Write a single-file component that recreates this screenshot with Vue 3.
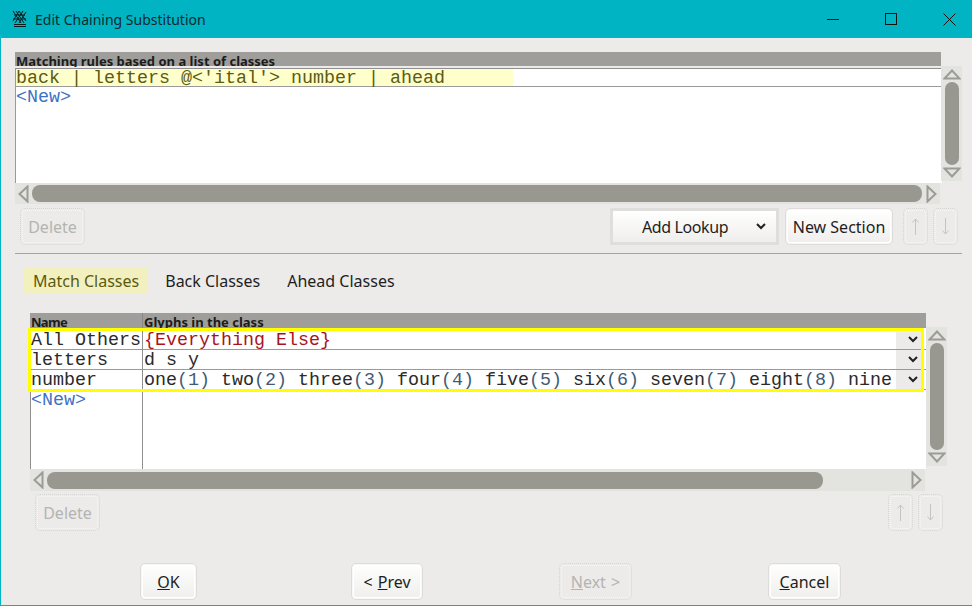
<template>
  <div class="window">
    <header class="titlebar">
      <svg class="app-icon" width="17" height="18" viewBox="0 0 17 18" fill="none" stroke="#0c1c1e" stroke-width="1">
        <path d="M3 14.5h12M3 16.5h12M2 1l8 12M5 1l8 12M8 1l7 10M12 1L4 13M15 2L8 13M8 1L2 11M3 5h11M2 9h13" />
      </svg>
      <span class="title">Edit Chaining Substitution</span>
      <div class="win-controls">
        <svg width="13" height="13" viewBox="0 0 13 13" stroke="#111" fill="none"><path d="M0 6.5h12" /></svg>
        <svg width="13" height="13" viewBox="0 0 13 13" stroke="#111" fill="none"><rect x="0.5" y="0.5" width="11" height="11" /></svg>
        <svg width="13" height="13" viewBox="0 0 13 13" stroke="#111" fill="none"><path d="M0.5 0.5l12 12M12.5 0.5l-12 12" /></svg>
      </div>
    </header>

    <main class="content">
      <section class="rules">
        <div class="rules-main">
          <div class="col-head rules-head"><span>Matching rules based on a list of classes</span></div>
          <div class="rule-list mono">
            <div class="rule-row"><span class="rule-hl">back | letters @&lt;'ital'&gt; number | ahead</span></div>
            <div class="new-row">&lt;New&gt;</div>
          </div>
          <div class="hbar hbar-top">
            <svg class="arrow" width="11" height="18" viewBox="0 0 11 18"><path d="M9.5 1.5L1.5 9l8 7.5z" /></svg>
            <div class="hthumb thumb-top"></div>
            <svg class="arrow" width="11" height="18" viewBox="0 0 11 18"><path d="M1.5 1.5L9.5 9l-8 7.5z" /></svg>
          </div>
        </div>
        <div class="vbar vbar-top">
          <svg class="arrow" width="18" height="11" viewBox="0 0 18 11"><path d="M1.5 9.5L9 1.5l7.5 8z" /></svg>
          <div class="vthumb"></div>
          <svg class="arrow" width="18" height="11" viewBox="0 0 18 11"><path d="M1.5 1.5L9 9.5l7.5-8z" /></svg>
        </div>
      </section>

      <div class="actions actions-top">
        <button class="btn delete" disabled>Delete</button>
        <span class="spacer"></span>
        <button class="btn add-lookup">
          <span class="add-label">Add Lookup</span>
          <svg width="10" height="7" viewBox="0 0 10 7" fill="none" stroke="#222" stroke-width="2"><path d="M1 1l4 4 4-4" /></svg>
        </button>
        <button class="btn new-section">New Section</button>
        <button class="btn arrow-btn" disabled>
          <svg width="9" height="17" viewBox="0 0 9 17" fill="none" stroke="#c4c4c8"><path d="M4.5 1v16M1.5 4.5l3-3.5 3 3.5" /></svg>
        </button>
        <button class="btn arrow-btn" disabled>
          <svg width="9" height="17" viewBox="0 0 9 17" fill="none" stroke="#c4c4c8"><path d="M4.5 0v16M1.5 12.5l3 3.5 3-3.5" /></svg>
        </button>
      </div>

      <hr class="sep" />

      <nav class="tabs">
        <span v-for="tab in tabs" :key="tab" class="tab" :class="{ active: tab === 'Match Classes' }">{{ tab }}</span>
      </nav>

      <section class="classes">
        <div class="classes-main">
          <div class="class-table">
            <div class="col-names">
              <div class="col-head"><span>Name</span></div>
              <div v-for="c in classes" :key="c.name" class="cell mono">{{ c.name }}</div>
              <div class="new-row mono">&lt;New&gt;</div>
            </div>
            <div class="col-glyphs">
              <div class="col-head"><span>Glyphs in the class</span></div>
              <div v-for="c in classes" :key="c.name" class="cell glyph-cell mono">
                <span class="glyph-text">
                  <span v-if="c.special" class="special">{{ c.special }}</span>
                  <template v-for="g in c.glyphs" :key="g.n">{{ g.n }}<span v-if="g.u" class="uni">({{ g.u }})</span>{{ ' ' }}</template>
                </span>
                <span class="drop">
                  <svg width="10" height="7" viewBox="0 0 10 7" fill="none" stroke="#222" stroke-width="2"><path d="M1 1l4 4 4-4" /></svg>
                </span>
              </div>
            </div>
            <div class="yellow-box"></div>
          </div>
          <div class="hbar hbar-low">
            <svg class="arrow" width="11" height="18" viewBox="0 0 11 18"><path d="M9.5 1.5L1.5 9l8 7.5z" /></svg>
            <div class="hthumb thumb-low"></div>
            <svg class="arrow" width="11" height="18" viewBox="0 0 11 18"><path d="M1.5 1.5L9.5 9l-8 7.5z" /></svg>
          </div>
        </div>
        <div class="vbar vbar-low">
          <svg class="arrow" width="18" height="11" viewBox="0 0 18 11"><path d="M1.5 9.5L9 1.5l7.5 8z" /></svg>
          <div class="vthumb"></div>
          <svg class="arrow" width="18" height="11" viewBox="0 0 18 11"><path d="M1.5 1.5L9 9.5l7.5-8z" /></svg>
        </div>
      </section>

      <div class="actions actions-low">
        <button class="btn delete" disabled>Delete</button>
        <span class="spacer"></span>
        <button class="btn arrow-btn" disabled>
          <svg width="9" height="17" viewBox="0 0 9 17" fill="none" stroke="#c4c4c8"><path d="M4.5 1v16M1.5 4.5l3-3.5 3 3.5" /></svg>
        </button>
        <button class="btn arrow-btn" disabled>
          <svg width="9" height="17" viewBox="0 0 9 17" fill="none" stroke="#c4c4c8"><path d="M4.5 0v16M1.5 12.5l3 3.5 3-3.5" /></svg>
        </button>
      </div>

      <footer class="footer">
        <button class="btn foot-btn ok"><u>O</u>K</button>
        <button class="btn foot-btn prev">&lt; <u>P</u>rev</button>
        <button class="btn foot-btn next" disabled><u>N</u>ext &gt;</button>
        <button class="btn foot-btn cancel"><u>C</u>ancel</button>
      </footer>
    </main>
  </div>
</template>

<script setup>
const tabs = ['Match Classes', 'Back Classes', 'Ahead Classes']

const digits = ['one', 'two', 'three', 'four', 'five', 'six', 'seven', 'eight', 'nine', 'zero']

const classes = [
  { name: 'All Others', special: '{Everything Else}', glyphs: [] },
  { name: 'letters', glyphs: [{ n: 'd' }, { n: 's' }, { n: 'y' }] },
  { name: 'number', glyphs: digits.map((n, i) => ({ n, u: String((i + 1) % 10) })) },
]
</script>

<style>
body {
  margin: 0;
  overflow: hidden;
}
</style>

<style scoped>
.window {
  width: 972px;
  height: 606px;
  box-sizing: border-box;
  background: #ecebe9;
  border-left: 1px solid #00b4c4;
  border-bottom: 1px solid #1fa9b5;
  font-family: 'Noto Sans', sans-serif;
  color: #1e1e1e;
  overflow: hidden;
}

.mono {
  font-family: 'Liberation Mono', monospace;
  font-size: 18.33px;
  line-height: 19px;
}

.titlebar {
  height: 38px;
  background: #00b4c4;
  display: flex;
  align-items: center;
  padding-left: 10px;
  color: #102a30;
}

.app-icon {
  margin-right: 7px;
}

.title {
  font-size: 14px;
}

.win-controls {
  margin-left: auto;
  display: flex;
  gap: 45px;
  padding-right: 16px;
}

.win-controls svg {
  display: block;
}

.content {
  padding: 14px 9px 0 14px;
}

.rules,
.classes {
  display: flex;
  align-items: flex-start;
}

.rules-main {
  width: 926px;
}

/* the toolkit clips these labels at the bottom, descenders are cut in the original too */
.col-head {
  height: 16px;
  background: linear-gradient(#a09e9b 14px, transparent 14px);
  font-size: 13px;
  font-weight: 700;
  line-height: 18px;
  padding-left: 1px;
  white-space: nowrap;
  color: #1c1c1c;
}

.col-head span {
  display: block;
  height: 15px;
  overflow: hidden;
}

.rule-list {
  height: 115px;
  width: 927px;
  box-sizing: border-box;
  background: #fff;
  border-left: 1px solid #999;
  border-top: 1px solid #8f8f8f;
}

.rule-row {
  height: 18px;
  box-sizing: border-box;
  border-bottom: 1px solid #9a9a9a;
  white-space: nowrap;
}

.rule-hl {
  display: block;
  width: 497px;
  height: 17px;
  background: #ffffcc;
  color: #5c5c12;
}

.rule-list .new-row {
  margin-top: 1px;
}

.new-row {
  color: #3f72c4;
  height: 19px;
}

.col-names .new-row {
  line-height: 21px;
}

.hbar {
  height: 21px;
  background: #e3e3e0;
  display: flex;
  align-items: center;
  padding: 0 3px;
  box-sizing: border-box;
}

.hbar-top {
  width: 925px;
}

.hbar-low {
  width: 895px;
  height: 22px;
}

.hthumb {
  height: 17px;
  background: #989890;
  border-radius: 8px;
  margin-left: 3px;
}

.thumb-top {
  width: 892px;
  margin-right: 4px;
}

.thumb-low {
  width: 777px;
  margin-right: 88px;
}

.arrow {
  flex: none;
  display: block;
  fill: none;
  stroke: #9c9c96;
  stroke-width: 2;
}

.vbar {
  width: 21px;
  background: #e3e3e0;
  display: flex;
  flex-direction: column;
  align-items: center;
  padding: 3px 0;
  box-sizing: border-box;
}

.vbar-top {
  height: 115px;
  margin-top: 14px;
}

.vbar-low {
  height: 139px;
  margin-top: 14px;
}

.vthumb {
  width: 14px;
  flex: 1;
  margin: 2px 0;
  background: #989890;
  border-radius: 7px;
}

.actions {
  display: flex;
  align-items: flex-start;
}

.actions-top {
  margin-top: 4px;
  padding: 0 5px;
  height: 45px;
}

.spacer {
  flex: 1;
}

.btn {
  font-family: 'Noto Sans', sans-serif;
  font-size: 16px;
  color: #1e1e1e;
  height: 37px;
  padding: 0 6px;
  box-sizing: border-box;
  background: linear-gradient(#fff, #efeeec);
  border: 1px solid #dddcda;
  border-radius: 5px;
  box-shadow: inset 0 0 0 1px #f7f7f6, inset 0 0 0 2px #fff;
}

.btn:disabled {
  color: #b4b4b2;
  background: #ecebe9;
  border: 1px dotted #d6d5d3;
  box-shadow: none;
  outline: 1px dotted #f8f8f8;
  outline-offset: -3px;
}

.delete {
  width: 65px;
}

.add-lookup {
  width: 169px;
  border: 3px solid #dfdedc;
  border-radius: 1px;
  display: flex;
  align-items: center;
  justify-content: space-between;
  padding: 0 10px 0 29px;
  margin-right: 6px;
  box-shadow: none;
}

.add-label {
  letter-spacing: -0.4px;
}

.new-section {
  width: 108px;
  margin-right: 10px;
}

.arrow-btn {
  width: 25px;
  padding: 0;
  margin-right: 5px;
  display: flex;
  align-items: center;
  justify-content: center;
}

.arrow-btn:last-child {
  margin-right: 0;
}

.sep {
  margin: 0;
  border: none;
  border-top: 1px solid #a5a3a0;
  width: 947px;
}

.tabs {
  display: flex;
  margin: 14px 0 0 9px;
  height: 26px;
}

.tab {
  font-size: 16px;
  line-height: 26px;
  padding: 0 9px;
  margin-right: 8px;
}

.tab:nth-child(2) {
  margin-right: 9px;
}

.tab.active {
  background: #f3f0c0;
  color: #5a5a10;
}

.classes {
  margin-top: 19px;
  padding-left: 15px;
}

.classes-main {
  width: 896px;
}

.class-table {
  position: relative;
  display: flex;
  height: 156px;
  background: #fff;
}

.class-table .col-head {
  height: 17px;
  background: linear-gradient(#a09e9b 15px, transparent 15px);
}

.col-names {
  width: 113px;
  flex: none;
  box-sizing: border-box;
  border-left: 1px solid #8e8e8e;
  border-right: 1px solid #8e8e8e;
}

.col-names .col-head {
  margin-left: -1px;
  margin-right: -1px;
  border-right: 1px solid #8a8886;
  padding-left: 1px;
  letter-spacing: -0.7px;
}

.col-glyphs {
  flex: 1;
  min-width: 0;
}

.cell {
  height: 20px;
  border-bottom: 1px solid #9a9a9a;
  box-sizing: border-box;
  white-space: nowrap;
  color: #2a2a2a;
  line-height: 21px;
}

.glyph-cell {
  display: flex;
  padding-left: 1px;
}

.glyph-text {
  width: 748px;
  flex: none;
  overflow-x: clip;
  white-space: pre;
}

.special {
  color: #a8141c;
}

.uni {
  color: #3f5a75;
}

.drop {
  width: 26px;
  height: 19px;
  margin-left: 4px;
  padding-right: 4px;
  box-sizing: border-box;
  flex: none;
  background: #ecebe9;
  display: flex;
  align-items: center;
  justify-content: flex-end;
}

.yellow-box {
  position: absolute;
  left: -2px;
  top: 15px;
  width: 896px;
  height: 64px;
  box-sizing: border-box;
  border: 3px solid #ffff00;
  pointer-events: none;
}

.actions-low {
  margin-top: 3px;
  padding: 0 20px;
  height: 33px;
}

.footer {
  display: flex;
  padding: 36px 0 0 125px;
}

.foot-btn {
  padding: 0;
  width: 73px;
  word-spacing: 1px;
}

.ok {
  width: 57px;
}

.prev {
  width: 72px;
  margin-left: 154px;
}

.next,
.cancel {
  margin-left: 136px;
}

.next u {
  text-decoration-color: #b4b4b2;
}
</style>
